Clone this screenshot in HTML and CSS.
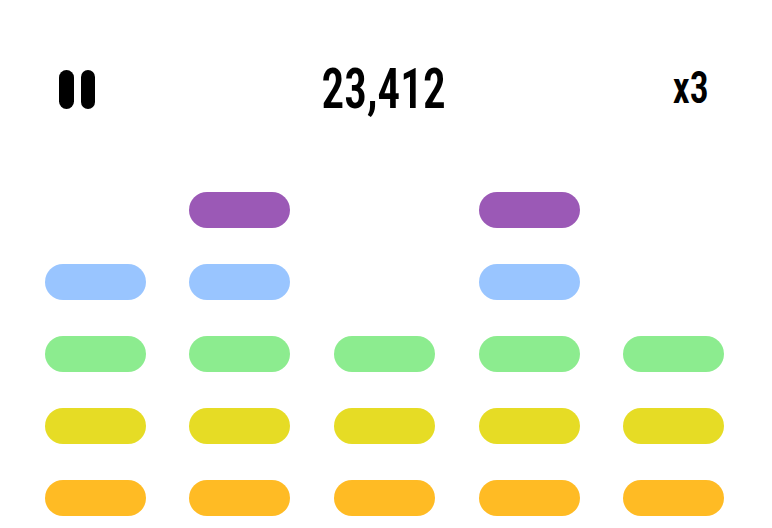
FILE: index.html
```html
<!DOCTYPE html>
<html lang="en">
<head>
  <meta charset="UTF-8" />
  <title>Equalizer Game</title>
  <link rel="stylesheet" href="styles.css">
</head>
<body>
  <div class="game">
    <!-- Top bar -->
    <div class="top-bar">
      <div class="pause">
        <span class="pause-bar"></span>
        <span class="pause-bar"></span>
      </div>
      <div class="score">23,412</div>
      <div class="multiplier">x3</div>
    </div>

    <!-- Board -->
    <div class="board">
      <span class="cell"></span>
      <span class="cell purple"></span>
      <span class="cell"></span>
      <span class="cell purple"></span>
      <span class="cell"></span>

      <span class="cell blue"></span>
      <span class="cell blue"></span>
      <span class="cell"></span>
      <span class="cell blue"></span>
      <span class="cell"></span>

      <span class="cell green"></span>
      <span class="cell green"></span>
      <span class="cell green"></span>
      <span class="cell green"></span>
      <span class="cell green"></span>

      <span class="cell yellow"></span>
      <span class="cell yellow"></span>
      <span class="cell yellow"></span>
      <span class="cell yellow"></span>
      <span class="cell yellow"></span>

      <span class="cell orange"></span>
      <span class="cell orange"></span>
      <span class="cell orange"></span>
      <span class="cell orange"></span>
      <span class="cell orange"></span>
    </div>
  </div>
</body>
</html>
```

FILE: styles.css
```css
html, body {
  margin: 0;
  background: white;
}

.game {
  width: 772px;
  height: 528px;
  overflow: hidden;
  font-family: Roboto, "Liberation Sans", sans-serif;
  font-weight: 600;
  font-stretch: 75%;
  color: black;
}

.top-bar {
  height: 192px;
  box-sizing: border-box;
  padding: 70px 64px 0 59px;
  display: grid;
  grid-template-columns: 1fr auto 1fr;
  align-items: start;
}

.pause {
  display: flex;
  gap: 7px;
}

.pause-bar {
  width: 14.5px;
  height: 39px;
  border-radius: 8px;
  background: black;
}

.score {
  font-size: 55px;
  line-height: 39px;
  transform: scaleX(0.82);
}

.multiplier {
  justify-self: end;
  margin-right: -1px;
  font-size: 45px;
  line-height: 36px;
  transform: scaleX(0.84);
  transform-origin: right center;
}

.board {
  margin-left: 44.8px;
  display: grid;
  grid-template-columns: repeat(5, 101px);
  grid-auto-rows: 36px;
  column-gap: 43.6px;
  row-gap: 36px;
}

.cell {
  border-radius: 18px;
}

.purple { background: #9b59b6; }
.blue { background: #99c5ff; }
.green { background: #8cec8f; }
.yellow { background: #e6dc25; }
.orange { background: #ffbb24; }
```
